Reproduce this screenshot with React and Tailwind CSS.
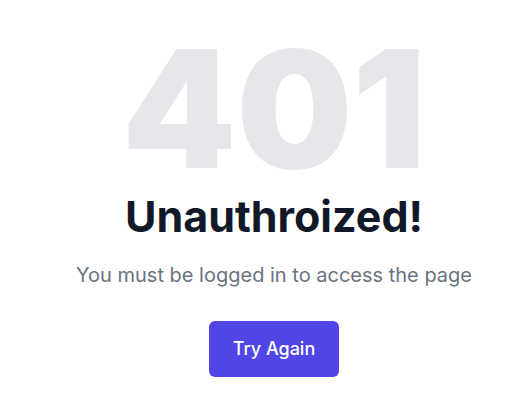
export default function App() {
  return (
    <div className="min-h-[417px] bg-white pl-4 flex flex-col items-center" style={{ fontFamily: "Inter, 'Noto Sans', sans-serif" }}>
      <h1 className="text-[163px] leading-none font-black text-[#e5e7eb] mt-[27px]">401</h1>
      <h2 className="text-[43px] leading-none font-bold text-[#111827] mt-[5px]">Unauthroized!</h2>
      <p className="text-xl text-[#6b7280] mt-[23px]">You must be logged in to access the page</p>
      <button className="mt-8 bg-[#4f46e5] text-white text-lg font-medium px-6 py-3.5 rounded-md leading-7">Try Again</button>
    </div>
  );
}
